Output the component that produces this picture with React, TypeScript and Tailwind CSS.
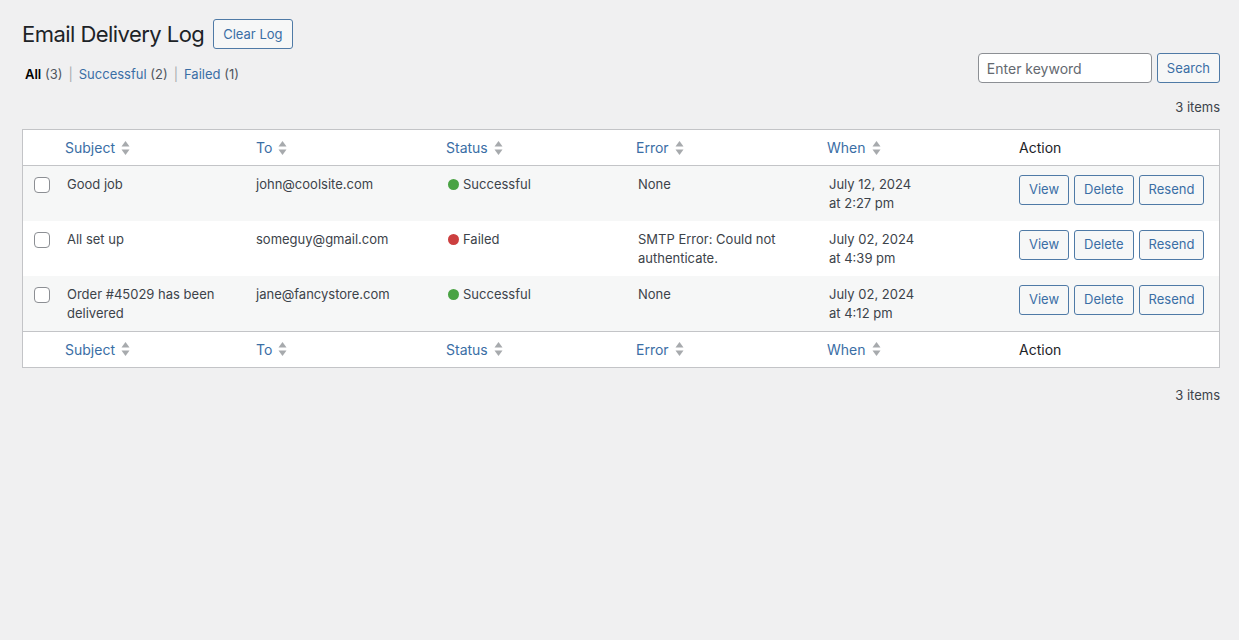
import React from "react";

const font = { fontFamily: 'Inter, "Noto Sans", "Liberation Sans", sans-serif' };

function SortIcon() {
  return (
    <svg width="9" height="16" viewBox="0 0 9 16" className="ml-[6px] inline-block">
      <path d="M4.5 1 L8.5 6.5 H0.5 Z" fill="#a7aaad" />
      <path d="M4.5 15 L8.5 9.5 H0.5 Z" fill="#a7aaad" />
    </svg>
  );
}

const cols = "grid grid-cols-[34px_191px_190px_190px_191px_192px_1fr]";

function HeaderRow({ top }: { top: boolean }) {
  const h = ["Subject", "To", "Status", "Error", "When"];
  return (
    <div
      className={`${cols} h-[36px] items-center bg-white ${top ? "border-b border-[#c3c4c7] pt-[1px]" : "border-t border-[#c3c4c7]"}`}
    >
      <div />
      {h.map((t) => (
        <div key={t} className="flex items-center pl-[8px] text-[14px] text-[#3a6ea5]">
          {t}
          <SortIcon />
        </div>
      ))}
      <div className="pl-[8px] text-[14px] text-[#1d2327]">Action</div>
    </div>
  );
}

function Btn({ children }: { children: React.ReactNode }) {
  return (
    <button className="h-[30px] px-[9px] pt-[1px] rounded-[3px] border border-[#4f7aa6] bg-[#f6f7f7] text-[13px] text-[#3a6ea5]">
      {children}
    </button>
  );
}

type Row = {
  subject: string;
  to: string;
  ok: boolean;
  error: string;
  date: string;
  time: string;
};

const rows: Row[] = [
  { subject: "Good job", to: "john@coolsite.com", ok: true, error: "None", date: "July 12, 2024", time: "at 2:27 pm" },
  { subject: "All set up", to: "someguy@gmail.com", ok: false, error: "SMTP Error: Could not authenticate.", date: "July 02, 2024", time: "at 4:39 pm" },
  { subject: "Order #45029 has been delivered", to: "jane@fancystore.com", ok: true, error: "None", date: "July 02, 2024", time: "at 4:12 pm" },
];

export default function App() {
  return (
    <div className="min-h-[640px] bg-[#f0f0f1] text-[#3c434a]" style={font}>
      <div className="pl-[22px] pr-[19px] pt-[17px]">
        <div className="flex items-center">
          <h1 className="text-[22px] leading-[34px] text-[#1d2327] tracking-[-0.55px]">Email Delivery Log</h1>
          <button className="ml-[9px] h-[30px] px-[9px] pt-[1px] rounded-[3px] border border-[#4f7aa6] bg-[#f6f7f7] text-[13px] text-[#3a6ea5]">
            Clear Log
          </button>
        </div>
        <div className="flex items-start justify-between">
          <div className="mt-[14px] text-[13px] leading-[18px] text-[#50575e] ml-[3px]">
            <span className="font-semibold text-[#000]">All</span> (3)
            <span className="mx-[6px] text-[#a7aaad]">|</span>
            <span className="text-[#3a6ea5]">Successful</span> (2)
            <span className="mx-[6px] text-[#a7aaad]">|</span>
            <span className="text-[#3a6ea5]">Failed</span> (1)
          </div>
          <div className="mt-[2px] flex flex-col items-end">
            <div className="flex gap-[5px]">
              <input
                placeholder="Enter keyword"
                className="w-[174px] h-[30px] rounded-[4px] border border-[#8c8f94] bg-white px-[8px] text-[14px] text-[#2c3338] placeholder:text-[#646970] outline-none"
              />
              <Btn>Search</Btn>
            </div>
            <div className="mt-[15px] text-[13px] text-[#3c434a]">3 items</div>
          </div>
        </div>

        <div className="mt-[11px] border border-[#c3c4c7] bg-white">
          <HeaderRow top />
          {rows.map((r, i) => (
            <div key={i} className={`${cols} h-[55px] text-[13px] leading-[19.5px] ${i % 2 === 0 ? "bg-[#f6f7f7]" : "bg-white"}`}>
              <div className="pt-[11px] pl-[11px]">
                <div className="w-[16px] h-[16px] rounded-[4px] border border-[#8c8f94] bg-white" />
              </div>
              <div className="pt-[9px] pl-[10px] pr-[10px]">{r.subject}</div>
              <div className="pt-[9px] pl-[8px] pr-[10px]">{r.to}</div>
              <div className="pt-[9px] pl-[10px] flex items-start">
                <span
                  className={`mt-[4px] mr-[4px] inline-block w-[11px] h-[11px] rounded-full ${r.ok ? "bg-[#4aa344]" : "bg-[#cc3f3f]"}`}
                />
                {r.ok ? "Successful" : "Failed"}
              </div>
              <div className="pt-[9px] pl-[10px] pr-[16px]">{r.error}</div>
              <div className="pt-[9px] pl-[10px]">
                <div>{r.date}</div>
                <div>{r.time}</div>
              </div>
              <div className="pt-[9px] pl-[8px] flex gap-[5px]">
                <Btn>View</Btn>
                <Btn>Delete</Btn>
                <Btn>Resend</Btn>
              </div>
            </div>
          ))}
          <HeaderRow top={false} />
        </div>
        <div className="mt-[18px] text-right text-[13px] text-[#3c434a]">3 items</div>
      </div>
    </div>
  );
}
